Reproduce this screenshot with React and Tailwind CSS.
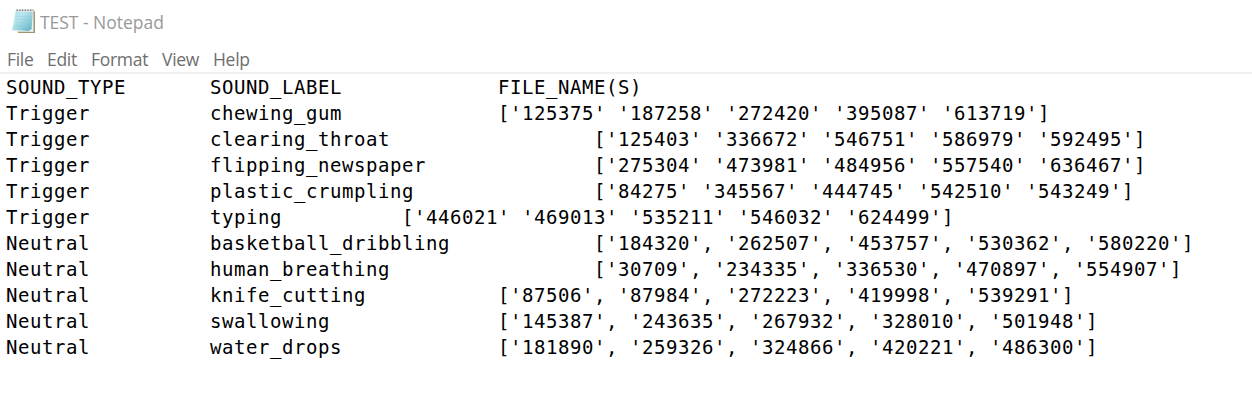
const menu = [
  { label: 'File', cell: 'w-[40px]' },
  { label: 'Edit', cell: 'w-[44px]' },
  { label: 'Format', cell: 'w-[71px]' },
  { label: 'View', cell: 'w-[51px]' },
  { label: 'Help', cell: 'w-[50px]' },
];

const NEAR = 'w-[192px]';
const MID = 'w-[288px]';
const FAR = 'w-[384px]';

const rows = [
  ['SOUND_TYPE', 'SOUND_LABEL', MID, 'FILE_NAME(S)'],
  ['Trigger', 'chewing_gum', MID, "['125375' '187258' '272420' '395087' '613719']"],
  ['Trigger', 'clearing_throat', FAR, "['125403' '336672' '546751' '586979' '592495']"],
  ['Trigger', 'flipping_newspaper', FAR, "['275304' '473981' '484956' '557540' '636467']"],
  ['Trigger', 'plastic_crumpling', FAR, "['84275' '345567' '444745' '542510' '543249']"],
  ['Trigger', 'typing', NEAR, "['446021' '469013' '535211' '546032' '624499']"],
  ['Neutral', 'basketball_dribbling', FAR, "['184320', '262507', '453757', '530362', '580220']"],
  ['Neutral', 'human_breathing', FAR, "['30709', '234335', '336530', '470897', '554907']"],
  ['Neutral', 'knife_cutting', MID, "['87506', '87984', '272223', '419998', '539291']"],
  ['Neutral', 'swallowing', MID, "['145387', '243635', '267932', '328010', '501948']"],
  ['Neutral', 'water_drops', MID, "['181890', '259326', '324866', '420221', '486300']"],
];

function NotepadIcon() {
  return (
    <svg className="block h-[26px] w-[25px] shrink-0" viewBox="0 0 25 26">
      <defs>
        <linearGradient id="sheet" x1="0" y1="0" x2="1" y2="1">
          <stop offset="0" stopColor="#a5dde8" />
          <stop offset="0.3" stopColor="#b9e7ef" />
          <stop offset="0.65" stopColor="#8fcddb" />
          <stop offset="1" stopColor="#58aabd" />
        </linearGradient>
      </defs>
      <path d="M22.5 2 L24 2.5 V24 H8 L6 23 Z" fill="#a1946c" />
      <path d="M4 1.5 H22.5 V22.8 H7 L1 22 Z" fill="#e4f2f4" />
      <path d="M5 2.5 H21.8 L20.5 20.5 L17.5 22 L1.5 20.8 Z" fill="url(#sheet)" />
      <path d="M5 7.5H21M4.5 10.5H21M4 13.5H20.8M3.3 16.5H20.5" stroke="#8ccbd8" strokeWidth="0.5" opacity="0.6" />
      <path d="M17.5 22 L20.5 20.5 L22 22.8 Z" fill="#f6f4ea" />
      <path d="M5 1.5H22" stroke="#e1e4e4" strokeWidth="2.6" />
      <path d="M5.5 1.3H22.5" stroke="#747b80" strokeWidth="1.6" strokeDasharray="1.3 1.4" />
    </svg>
  );
}

export default function App() {
  return (
    <div className="flex h-[416px] w-[1252px] flex-col overflow-hidden bg-white">
      <header className="flex h-[44px] items-center pl-[11px] font-['Open_Sans',sans-serif] text-[17.5px] text-[#999999]">
        <NotepadIcon />
        <span className="ml-[4px] whitespace-pre tracking-[-0.03px]">TEST - Notepad</span>
      </header>
      <nav className="flex h-[30px] items-center border-b-2 border-[#f0f0f0] pl-[7px] pt-[2px] font-['Open_Sans',sans-serif] text-[17.5px] tracking-[-0.3px] text-[#6e6e6e]">
        {menu.map(({ label, cell }) => (
          <span key={label} className={cell}>{label}</span>
        ))}
      </nav>
      <main className="flex flex-col pl-[6px] font-['DejaVu_Sans_Mono',monospace] text-[19px] leading-[26px] tracking-[0.561px] text-black">
        {rows.map(([type, label, width, files]) => (
          <div key={label} className="flex h-[26px] whitespace-pre">
            <span className="w-[204px] shrink-0">{type}</span>
            <span className={`${width} shrink-0`}>{label}</span>
            <span>{files}</span>
          </div>
        ))}
      </main>
    </div>
  );
}
